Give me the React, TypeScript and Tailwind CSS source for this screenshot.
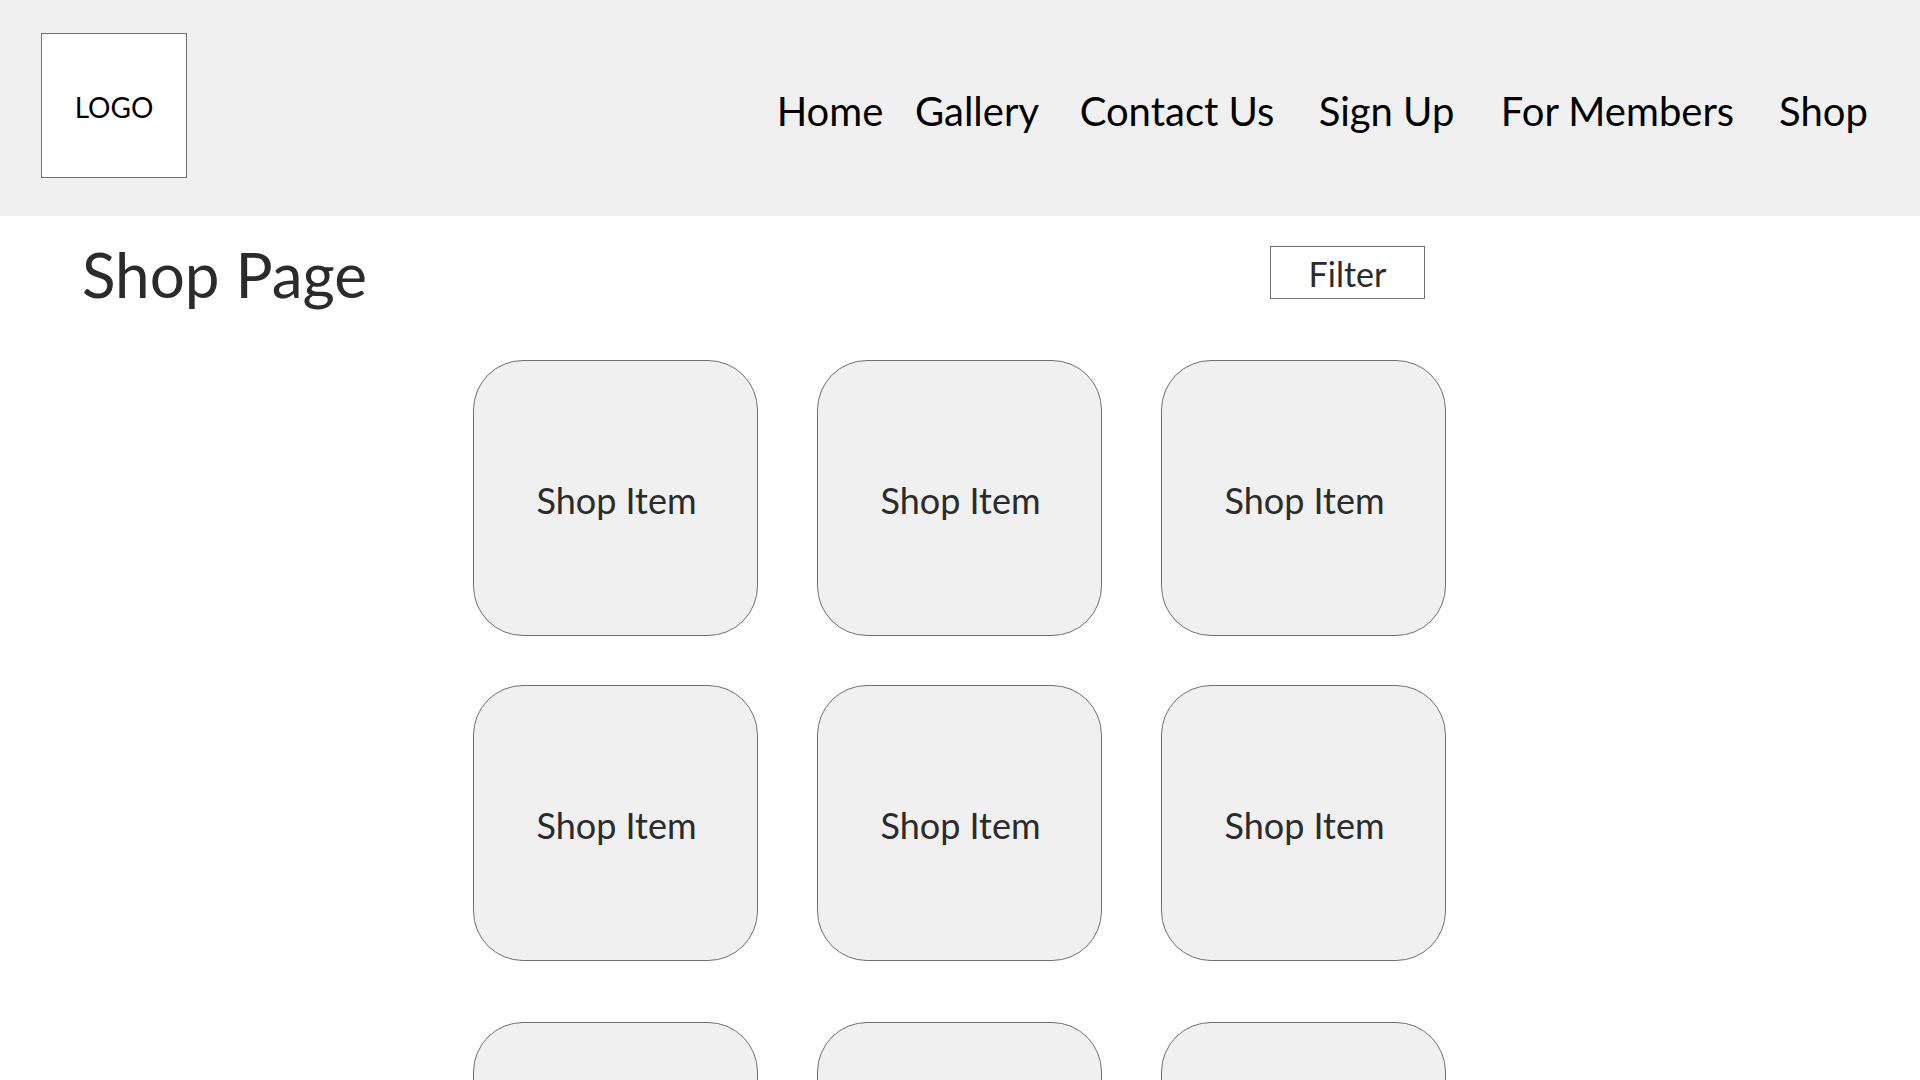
import React from "react";

const navItems: { label: string; w: string }[] = [
  { label: "Home", w: "w-[140px]" },
  { label: "Gallery", w: "w-[154px]" },
  { label: "Contact Us", w: "w-[246px]" },
  { label: "Sign Up", w: "w-[173px]" },
  { label: "For Members", w: "w-[289px]" },
  { label: "Shop", w: "w-[123px]" },
];

function Card() {
  return (
    <div className="w-[285px] h-[276px] rounded-[50px] border border-[#707070] bg-[#f0f0f0] flex items-center justify-center pt-[3px] pl-[2px]">
      <span className="text-[36px] leading-none text-[#2b2b2b]">Shop Item</span>
    </div>
  );
}

function Row({ className = "" }: { className?: string }) {
  return (
    <div className={`flex gap-[59px] ${className}`}>
      <Card />
      <Card />
      <Card />
    </div>
  );
}

export default function App() {
  return (
    <div className="h-screen w-full overflow-hidden bg-white font-['Lato',sans-serif]">
      <header className="h-[216px] bg-[#f0f0f0] flex items-start">
        <div className="ml-[41px] mt-[33px] w-[146px] h-[145px] border border-[#707070] bg-white flex items-center justify-center pt-[2px]">
          <span className="text-[28px] leading-none text-black">LOGO</span>
        </div>
        <nav className="ml-auto mr-[35px] h-full flex items-center pt-[5px]">
          {navItems.map((n) => (
            <div key={n.label} className={`${n.w} flex justify-center`}>
              <span className="text-[40px] leading-none text-black whitespace-nowrap">{n.label}</span>
            </div>
          ))}
        </nav>
      </header>
      <main>
        <div className="h-[144px] flex items-start pt-[27px]">
          <div className="w-[1270px] pl-[82px]">
            <h1 className="text-[62px] leading-none text-[#2b2b2b]">Shop Page</h1>
          </div>
          <button className="mt-[3px] w-[155px] h-[53px] border border-[#707070] bg-white flex items-center justify-center pt-[3px]">
            <span className="text-[34px] leading-none text-[#2b2b2b]">Filter</span>
          </button>
        </div>
        <div className="ml-[473px] flex flex-col">
          <Row />
          <Row className="mt-[49px]" />
          <Row className="mt-[61px]" />
        </div>
      </main>
    </div>
  );
}
